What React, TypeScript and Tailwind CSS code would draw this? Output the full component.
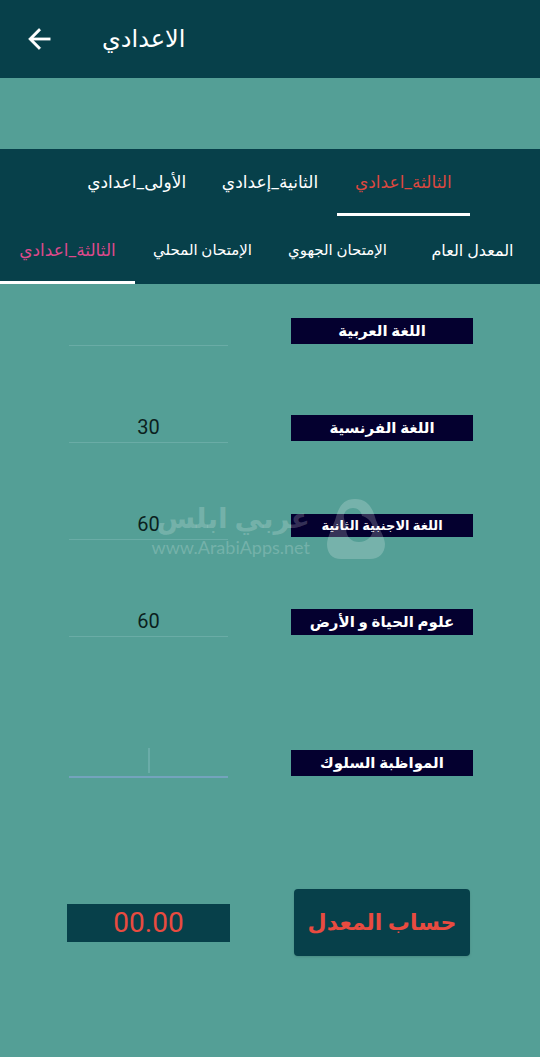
import { useState } from 'react';

const levels = ['الأولى_اعدادي', 'الثانية_إعدادي', 'الثالثة_اعدادي'];

const exams = [
  { label: 'الثالثة_اعدادي', size: 'text-[17px]' },
  { label: 'الإمتحان المحلي', size: 'text-[15px]' },
  { label: 'الإمتحان الجهوي', size: 'text-[15px]' },
  { label: 'المعدل العام', size: 'text-[16px]' },
];

const subjects = [
  { id: 'arabic', label: 'اللغة العربية', value: '' },
  { id: 'french', label: 'اللغة الفرنسية', value: '30' },
  { id: 'second', label: 'اللغة الاجنبية الثانية', value: '60', small: true, watermark: true },
  { id: 'science', label: 'علوم الحياة و الأرض', value: '60' },
  { id: 'conduct', label: 'المواظبة السلوك', value: '', active: true },
];

const row = 'grid grid-cols-[163fr_182fr] items-center gap-[61px] px-[67px]';

function Watermark() {
  return (
    <div className="pointer-events-none absolute inset-0 flex items-center justify-center gap-4 pt-2 text-white/20">
      <div className="flex w-[156px] flex-col items-end whitespace-nowrap">
        <span dir="rtl" className="text-[28px] leading-9 font-bold">عربي ابلس</span>
        <span className="font-[Lato] text-[18px] leading-5">www.ArabiApps.net</span>
      </div>
      <svg width="60" height="62" viewBox="0 0 60 62" fill="currentColor" fillRule="evenodd">
        <path d="M29 1C41 1 46 9 49 19C51 27 59 39 59 46C59 55 53 61 44 61H15C6 61 1 55 1 46C1 39 8 27 10 19C13 9 17 1 29 1ZM27 10C21 10 17 15 18 20C18 23 20 25 21 27C18 36 24 44 33 44C41 44 47 38 47 31C47 24 41 19 36 18C35 13 32 10 27 10Z" />
      </svg>
    </div>
  );
}

export default function App() {
  const [level, setLevel] = useState(2);
  const [exam, setExam] = useState(0);
  const [grades, setGrades] = useState(subjects.map((s) => s.value));

  return (
    <div className="min-h-screen bg-[#549f96] font-[Roboto,'DejaVu_Sans',sans-serif] text-white">
      <header className="flex h-[78px] items-center gap-[47px] bg-[#07404a] px-[23px]">
        <button type="button" aria-label="رجوع">
          <svg width="32" height="32" viewBox="0 0 24 24" fill="currentColor" stroke="currentColor" strokeWidth="0.2">
            <path d="M20.5 11H7.83l5.59-5.59L12 4l-8 8 8 8 1.41-1.41L7.83 13H20.5v-2z" />
          </svg>
        </button>
        <h1 className="text-[24px] leading-8">الاعدادي</h1>
      </header>

      <div className="mt-[71px] bg-[#07404a]">
        <nav className="flex h-[67px] justify-center px-[70px]">
          {levels.map((label, i) => (
            <button
              key={label}
              type="button"
              onClick={() => setLevel(i)}
              className={`flex-1 border-b-[3px] pt-1 text-[17px] whitespace-nowrap ${
                level === i ? 'border-white text-[#dc4840]' : 'border-transparent'
              }`}
            >
              {label}
            </button>
          ))}
        </nav>
        <nav className="flex h-[68px]">
          {exams.map(({ label, size }, i) => (
            <button
              key={label}
              type="button"
              onClick={() => setExam(i)}
              className={`flex-1 border-b-[3px] pt-1 whitespace-nowrap ${size} ${
                exam === i ? 'border-white text-[#dd4a8c]' : 'border-transparent'
              }`}
            >
              {label}
            </button>
          ))}
        </nav>
      </div>

      <form className="flex flex-col gap-[39px] pt-[18px] pb-16" onSubmit={(e) => e.preventDefault()}>
        {subjects.map((s, i) => (
          <div key={s.id} className={`relative h-[58px] ${row} ${s.active ? 'mt-[44px]' : ''}`}>
            <div className="relative mx-[2px]">
              <input
                id={s.id}
                inputMode="decimal"
                value={grades[i]}
                onChange={(e) => setGrades(grades.map((g, n) => (n === i ? e.target.value : g)))}
                className={`block h-[30px] w-full pb-[2px] text-center text-[20px] text-[#0b1f20] outline-none ${
                  s.active ? 'border-b-2 border-[#74a3bd]' : 'border-b border-[#6aaca6]'
                }`}
              />
              {s.active && (
                <span className="absolute top-0 left-1/2 h-[25px] w-[2px] -translate-x-1/2 bg-[#6aaca8]" />
              )}
            </div>
            <label
              htmlFor={s.id}
              dir="rtl"
              className={`bg-[#04002f] text-center font-bold whitespace-nowrap ${
                s.small ? 'text-[13px] leading-[23px]' : 'text-[15px] leading-[26px]'
              }`}
            >
              {s.label}
            </label>
            {s.watermark && <Watermark />}
          </div>
        ))}

        <div className={`mt-[58px] ${row}`}>
          <output className="bg-[#07404a] text-center text-[28px] leading-[38px] text-[#e94b40]">00.00</output>
          <button
            type="submit"
            dir="rtl"
            className="mx-[3px] h-[67px] rounded bg-[#07404a] text-[22px] font-bold whitespace-nowrap text-[#e94b40] shadow"
          >
            حساب المعدل
          </button>
        </div>
      </form>
    </div>
  );
}
